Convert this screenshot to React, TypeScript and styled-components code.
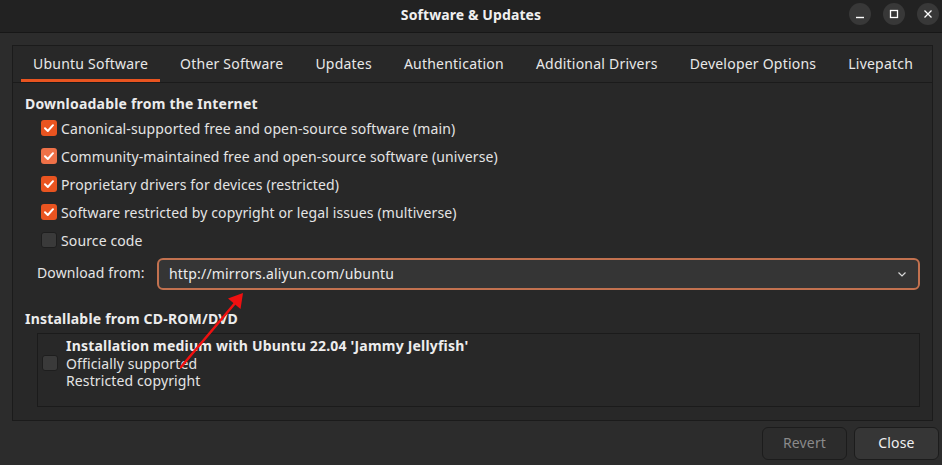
import React from "react";
import styled, { createGlobalStyle } from "styled-components";

const Global = createGlobalStyle`
  html, body { margin: 0; padding: 0; background: #2c2c2c; }
  * { box-sizing: border-box; }
`;

const FONT = `"Noto Sans", "Open Sans", sans-serif`;

const Window = styled.div`
  position: relative;
  width: 942px;
  height: 465px;
  background: #2c2c2c;
  color: #e6e6e6;
  font-family: ${FONT};
  font-size: 14px;
  display: flex;
  flex-direction: column;
  overflow: hidden;
`;

const TitleBar = styled.div`
  height: 33px;
  flex: none;
  background: #222222;
  border-bottom: 1px solid #171717;
  display: grid;
  grid-template-columns: 1fr auto 1fr;
  align-items: center;
`;

const Title = styled.div`
  grid-column: 2;
  font-weight: 700;
  font-size: 14px;
  color: #f0f0f0;
  margin-top: -4px;
  letter-spacing: 0.1px;
`;

const Controls = styled.div`
  grid-column: 3;
  justify-self: end;
  display: flex;
  gap: 12px;
  padding-right: 3px;
  margin-top: -4px;
`;

const CtlButton = styled.div`
  width: 22px;
  height: 22px;
  border-radius: 50%;
  background: #383838;
  display: flex;
  align-items: center;
  justify-content: center;
`;

const Body = styled.div`
  flex: 1;
  display: flex;
  flex-direction: column;
  padding: 12px 9px 5px 12px;
`;

const Frame = styled.div`
  height: 376px;
  border: 1px solid #1b1b1b;
  background: #282828;
  display: flex;
  flex-direction: column;
`;

const TabBar = styled.div`
  height: 37px;
  flex: none;
  display: flex;
  gap: 8px;
  padding-left: 8px;
  border-bottom: 1px solid #1b1b1b;
`;

const Tab = styled.div<{ $active?: boolean }>`
  padding: 0 12px;
  display: flex;
  align-items: center;
  color: #e8e8e8;
  font-size: 14px;
  letter-spacing: 0.22px;
  border-bottom: 3px solid ${(p) => (p.$active ? "#e95420" : "transparent")};
  padding-top: 1px;
`;

const Content = styled.div`
  display: flex;
  flex-direction: column;
  padding: 11px 12px 0 12px;
`;

const Heading = styled.div<{ $top?: number }>`
  font-weight: 700;
  font-size: 14px;
  line-height: 20px;
  color: #ececec;
  letter-spacing: 0.2px;
  margin-top: ${(p) => p.$top ?? 0}px;
`;

const Options = styled.div`
  display: flex;
  flex-direction: column;
  padding-left: 16px;
`;

const OptionRow = styled.label`
  height: 28px;
  display: flex;
  align-items: center;
  gap: 4px;
  color: #e4e4e4;
  letter-spacing: 0.12px;
`;

const Box = styled.span<{ $checked?: boolean; $hover?: boolean }>`
  width: 16px;
  height: 16px;
  flex: none;
  border-radius: 3px;
  display: inline-flex;
  align-items: center;
  justify-content: center;
  background: ${(p) =>
    p.$checked ? (p.$hover ? "#ef7148" : "#e95420") : "#3a3a3a"};
  border: 1px solid ${(p) => (p.$checked ? "transparent" : "#1e1e1e")};
`;

const DownloadRow = styled.div`
  display: flex;
  align-items: center;
  margin-top: 4px;
  padding-left: 12px;
  gap: 12px;
`;

const Label = styled.span`
  width: 108px;
  color: #e4e4e4;
  margin-top: -3px;
  letter-spacing: 0.12px;
`;

const Combo = styled.div`
  flex: 1;
  height: 32px;
  border: 2px solid #c2714f;
  border-radius: 6px;
  background: #353535;
  display: flex;
  align-items: center;
  justify-content: space-between;
  padding: 0 10px 0 10px;
  color: #ececec;
`;

const ComboText = styled.span`
  margin-top: -2px;
  letter-spacing: 0.18px;
`;

const MediaBox = styled.div`
  margin: 4px 0 0 12px;
  height: 74px;
  border: 1px solid #1b1b1b;
  display: flex;
  align-items: flex-start;
  padding: 3px 0 0 4px;
  gap: 8px;
`;

const MediaCheck = styled.div`
  padding-top: 18px;
`;

const MediaText = styled.div`
  display: flex;
  flex-direction: column;
  line-height: 17.5px;
  color: #e4e4e4;
  letter-spacing: 0.12px;
`;

const Strong = styled.span`
  font-weight: 700;
  color: #ededed;
  letter-spacing: 0.2px;
`;

const Footer = styled.div`
  display: flex;
  justify-content: flex-end;
  gap: 7px;
  margin-top: 6px;
  margin-right: -6px;
`;

const Button = styled.div<{ $disabled?: boolean }>`
  width: 85px;
  height: 33px;
  border-radius: 6px;
  border: 1px solid #1c1c1c;
  background: ${(p) => (p.$disabled ? "#2c2c2c" : "#363636")};
  color: ${(p) => (p.$disabled ? "#8a8a8a" : "#f0f0f0")};
  display: flex;
  align-items: center;
  justify-content: center;
  font-size: 14px;
  letter-spacing: 0.15px;
  padding-bottom: 2px;
`;

const Annotation = styled.svg`
  position: absolute;
  left: 0;
  top: 0;
  pointer-events: none;
`;

const Check = () => (
  <svg width="12" height="12" viewBox="0 0 12 12">
    <path d="M2 6.3 L4.8 9 L10 3.2" fill="none" stroke="#fff" strokeWidth="2" strokeLinecap="round" strokeLinejoin="round" />
  </svg>
);

const options = [
  { text: "Canonical-supported free and open-source software (main)", checked: true },
  { text: "Community-maintained free and open-source software (universe)", checked: true, hover: true },
  { text: "Proprietary drivers for devices (restricted)", checked: true },
  { text: "Software restricted by copyright or legal issues (multiverse)", checked: true },
  { text: "Source code", checked: false },
];

const tabs = [
  "Ubuntu Software",
  "Other Software",
  "Updates",
  "Authentication",
  "Additional Drivers",
  "Developer Options",
  "Livepatch",
];

export default function App() {
  return (
    <>
      <Global />
      <Window>
        <TitleBar>
          <Title>Software &amp; Updates</Title>
          <Controls>
            <CtlButton>
              <svg width="10" height="10" viewBox="0 0 10 10">
                <path d="M1 8.5 H9" stroke="#fff" strokeWidth="1.4" />
              </svg>
            </CtlButton>
            <CtlButton>
              <svg width="10" height="10" viewBox="0 0 10 10">
                <rect x="1.5" y="1.5" width="7" height="7" fill="none" stroke="#fff" strokeWidth="1.3" />
              </svg>
            </CtlButton>
            <CtlButton>
              <svg width="10" height="10" viewBox="0 0 10 10">
                <path d="M1.5 1.5 L8.5 8.5 M8.5 1.5 L1.5 8.5" stroke="#fff" strokeWidth="1.3" />
              </svg>
            </CtlButton>
          </Controls>
        </TitleBar>
        <Body>
          <Frame>
            <TabBar>
              {tabs.map((t, i) => (
                <Tab key={t} $active={i === 0}>
                  {t}
                </Tab>
              ))}
            </TabBar>
            <Content>
              <Heading>Downloadable from the Internet</Heading>
              <Options>
                {options.map((o) => (
                  <OptionRow key={o.text}>
                    <Box $checked={o.checked} $hover={o.hover}>
                      {o.checked && <Check />}
                    </Box>
                    {o.text}
                  </OptionRow>
                ))}
              </Options>
              <DownloadRow>
                <Label>Download from:</Label>
                <Combo>
                  <ComboText>http://mirrors.aliyun.com/ubuntu</ComboText>
                  <svg width="12" height="12" viewBox="0 0 12 12">
                    <path d="M2.5 4.5 L6 8 L9.5 4.5" fill="none" stroke="#d8d8d8" strokeWidth="1.2" />
                  </svg>
                </Combo>
              </DownloadRow>
              <Heading $top={19}>Installable from CD-ROM/DVD</Heading>
              <MediaBox>
                <MediaCheck>
                  <Box />
                </MediaCheck>
                <MediaText>
                  <Strong>Installation medium with Ubuntu 22.04 'Jammy Jellyfish'</Strong>
                  <span>Officially supported</span>
                  <span>Restricted copyright</span>
                </MediaText>
              </MediaBox>
            </Content>
          </Frame>
          <Footer>
            <Button $disabled>Revert</Button>
            <Button>Close</Button>
          </Footer>
        </Body>
        <Annotation width="942" height="465" viewBox="0 0 942 465">
          <line x1="181" y1="367" x2="236" y2="302" stroke="#f01010" strokeWidth="2.5" strokeLinecap="round" />
          <polygon points="243,293 240.5,309 228,298.5" fill="#f01010" />
        </Annotation>
      </Window>
    </>
  );
}
